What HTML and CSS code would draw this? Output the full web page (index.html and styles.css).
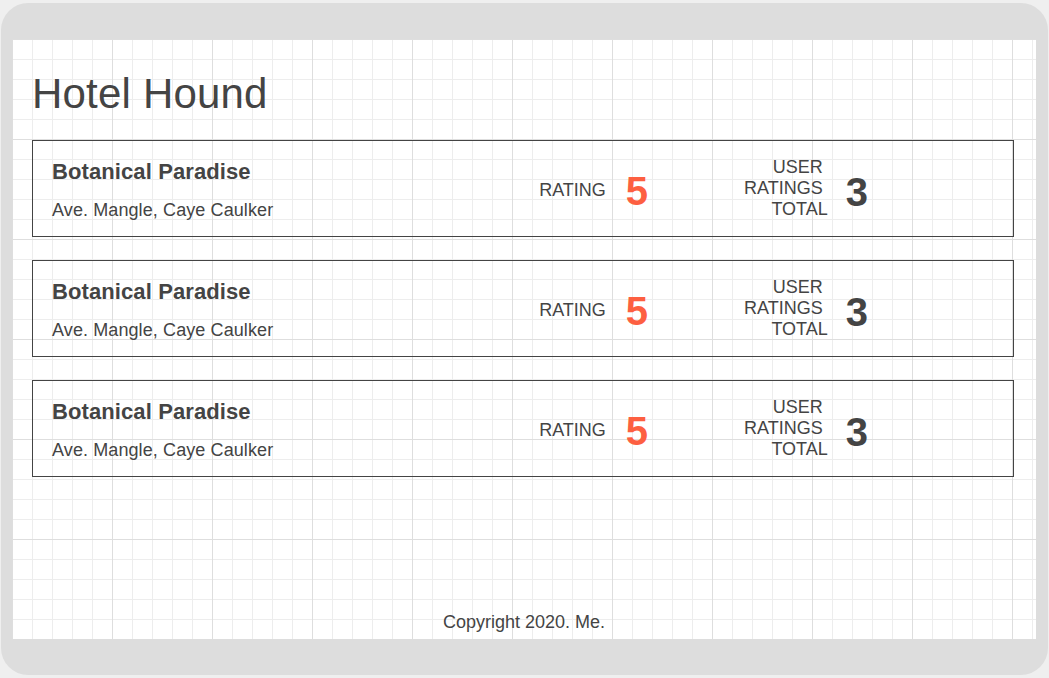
FILE: index.html
```html
<!DOCTYPE html>
<html lang="en">
<head>
<meta charset="utf-8">
<title>Hotel Hound</title>
<link rel="stylesheet" href="styles.css">
</head>
<body>
<div class="frame">
  <div class="canvas">
    <main class="content">
      <h1 class="title">Hotel Hound</h1>
      <ul class="hotels">
        <li class="hotel">
          <div class="info">
            <h2 class="name">Botanical Paradise</h2>
            <p class="address">Ave. Mangle, Caye Caulker</p>
          </div>
          <div class="rating">
            <span class="label">Rating</span>
            <span class="score">5</span>
          </div>
          <div class="user-ratings">
            <span class="label label-stack">User&nbsp;<br>Ratings&nbsp;<br>Total</span>
            <span class="count">3</span>
          </div>
        </li>
        <li class="hotel">
          <div class="info">
            <h2 class="name">Botanical Paradise</h2>
            <p class="address">Ave. Mangle, Caye Caulker</p>
          </div>
          <div class="rating">
            <span class="label">Rating</span>
            <span class="score">5</span>
          </div>
          <div class="user-ratings">
            <span class="label label-stack">User&nbsp;<br>Ratings&nbsp;<br>Total</span>
            <span class="count">3</span>
          </div>
        </li>
        <li class="hotel">
          <div class="info">
            <h2 class="name">Botanical Paradise</h2>
            <p class="address">Ave. Mangle, Caye Caulker</p>
          </div>
          <div class="rating">
            <span class="label">Rating</span>
            <span class="score">5</span>
          </div>
          <div class="user-ratings">
            <span class="label label-stack">User&nbsp;<br>Ratings&nbsp;<br>Total</span>
            <span class="count">3</span>
          </div>
        </li>
      </ul>
    </main>
    <footer class="footer">Copyright 2020. Me.</footer>
  </div>
</div>
</body>
</html>
```

FILE: styles.css
```css
* {
  box-sizing: border-box;
}

html, body {
  margin: 0;
  padding: 0;
}

body {
  background: #efefef;
  padding: 3px 1px 3px 1px;
  font-family: "Liberation Sans", Arial, sans-serif;
  color: #444444;
}

.frame {
  width: 1047px;
  height: 672px;
  background: #dddddd;
  border-radius: 27px;
  padding: 36px 11px 36px 11px;
}

.canvas {
  width: 1024px;
  height: 600px;
  display: flex;
  flex-direction: column;
  background-color: #ffffff;
  background-image:
    linear-gradient(to right, #dedede 1px, transparent 1px),
    linear-gradient(to bottom, #dedede 1px, transparent 1px),
    linear-gradient(to right, #ededed 1px, transparent 1px),
    linear-gradient(to bottom, #ededed 1px, transparent 1px);
  background-size: 100px 100px, 100px 100px, 20px 20px, 20px 20px;
}

.content {
  padding: 20px 22px 0 20px;
}

.title {
  margin: 11px 0 22px 0;
  font-size: 42px;
  line-height: 48px;
  font-weight: 400;
  letter-spacing: 0.2px;
  color: #444444;
}

.hotels {
  list-style: none;
  margin: 0;
  padding: 0;
  display: flex;
  flex-direction: column;
  gap: 23px;
}

.hotel {
  display: flex;
  align-items: center;
  border: 1px solid #444444;
  padding: 0 145px 0 19px;
}

.info {
  flex: 1;
  min-width: 0;
  padding: 19px 0 15px 0;
}

.name {
  margin: 0;
  font-size: 22px;
  line-height: 24px;
  font-weight: 700;
  letter-spacing: 0.1px;
  color: #444444;
}

.address {
  margin: 16px 0 0 0;
  font-size: 18px;
  line-height: 21px;
  letter-spacing: 0.1px;
  color: #444444;
}

.label {
  font-size: 18px;
  line-height: 21px;
  text-transform: uppercase;
  color: #444444;
}

.label-stack {
  display: block;
  text-align: right;
}

.rating,
.user-ratings {
  display: flex;
  align-items: center;
}

.rating {
  gap: 20px;
}

.rating .label {
  padding-top: 3px;
}

.user-ratings {
  gap: 18px;
  margin-left: 96px;
}

.score,
.count {
  font-size: 40px;
  line-height: 46px;
  font-weight: 700;
}

.score {
  padding-top: 5px;
  color: #fd5f41;
}

.count {
  padding-top: 6px;
  color: #444444;
}

.footer {
  margin-top: auto;
  padding-bottom: 6px;
  text-align: center;
  font-size: 18px;
  line-height: 21px;
  color: #444444;
}
```
